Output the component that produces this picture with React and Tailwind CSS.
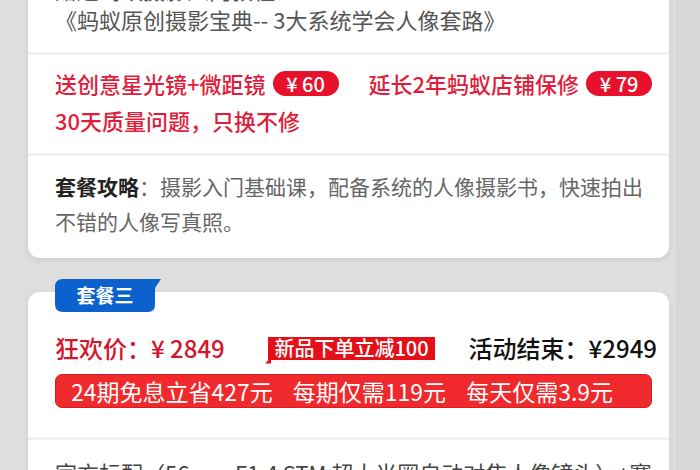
import React from "react";

const font = { fontFamily: '"Noto Sans CJK SC", "Noto Sans", sans-serif' };

function Badge({ children }) {
  return (
    <span className="ml-[7px] inline-flex h-[25px] w-[66px] shrink-0 items-center justify-center rounded-full bg-[#e8112b] text-[20px] leading-none font-medium text-white">
      {children}
    </span>
  );
}

function Divider() {
  return <div className="h-[3px] bg-[#f0f0f0]" />;
}

export default function App() {
  return (
    <div className="flex h-[470px] w-[700px] overflow-hidden bg-[#dedede]" style={font}>
      <div className="flex w-[676px] flex-col pl-[28px] pr-[7px]">
        {/* Card 1 */}
        <div className="mt-[-30px] rounded-[12px] bg-white shadow-[0_2px_6px_rgba(0,0,0,0.08)]">
          <div className="px-[27px] pt-[13px] pb-[21px] text-[22px] text-[#555]">
            <div className="mt-[-6px] leading-[24px]">赠送蚂蚁摄影入门教程：</div>
            <div className="mt-[6px] leading-[24px]">《蚂蚁原创摄影宝典-- 3大系统学会人像套路》</div>
          </div>
          <Divider />
          <div className="whitespace-nowrap pl-[27px] pr-[10px] pt-[10px] pb-[14px] text-[22px] font-medium text-[#e01e3c]">
            <div className="flex h-[37px] items-center">
              <span className="shrink-0">送创意星光镜+微距镜</span>
              <Badge>¥ 60</Badge>
              <span className="ml-[30px] shrink-0">延长2年蚂蚁店铺保修</span>
              <Badge>¥ 79</Badge>
            </div>
            <div className="flex h-[37px] items-center">30天质量问题，只换不修</div>
          </div>
          <Divider />
          <div className="pl-[27px] pr-[17px] pt-[13px] pb-[19px] text-[21px] leading-[35px] text-[#666]">
            <span className="font-bold text-[#222]">套餐攻略</span>：摄影入门基础课，配备系统的人像摄影书，快速拍出不错的人像写真照。
          </div>
        </div>

        {/* Card 2 */}
        <div className="relative mt-[34px] rounded-[12px] bg-white shadow-[0_2px_6px_rgba(0,0,0,0.08)]">
          <div className="absolute left-[27px] top-[-13px] h-[33px] w-[106px]">
            <svg className="absolute inset-0" width="106" height="33" viewBox="0 0 106 33">
              <path d="M0 8 Q0 0 8 0 L106 0 L100 9 L100 26 Q100 33 93 33 L8 33 Q0 33 0 25 Z" fill="#0b62cf" />
            </svg>
            <div className="relative flex h-full w-[100px] items-center justify-center text-[19px] font-bold text-white">
              套餐三
            </div>
          </div>

          <div className="pl-[27px] pr-[12px] pt-[38px] pb-[29px]">
            <div className="flex h-[36px] items-center whitespace-nowrap">
              <span className="w-[213px] text-[24px] font-medium text-[#d3162b]">狂欢价：¥ 2849</span>
              <span className="relative flex h-[23px] w-[167px] items-center justify-center bg-[#e50f18] text-[20px] font-medium text-white">
                新品下单立减100
                <span className="absolute bottom-[-4px] left-[-3px] h-[6px] w-[6px] bg-[#e50f18] [clip-path:polygon(100%_0,100%_100%,0_100%)]" />
              </span>
              <span className="ml-auto text-[24px] font-medium text-[#111]">活动结束：¥2949</span>
            </div>
            <div className="mt-[8px] mr-[5px] flex h-[34px] items-center gap-[20px] whitespace-nowrap rounded-[7px] border border-[#d81d22] bg-[#f0292d] pl-[15px] text-[23px] text-white">
              <span>24期免息立省427元</span>
              <span>每期仅需119元</span>
              <span>每天仅需3.9元</span>
            </div>
          </div>
          <Divider />
          <div className="whitespace-nowrap pl-[27px] pt-[14px] text-[22px] leading-[36px] text-[#444]">
            官方标配（56mm F1.4 STM 超大光圈自动对焦人像镜头）+赛
          </div>
        </div>
      </div>
      <div className="flex-1 bg-[#d8d6d8]" />
    </div>
  );
}
